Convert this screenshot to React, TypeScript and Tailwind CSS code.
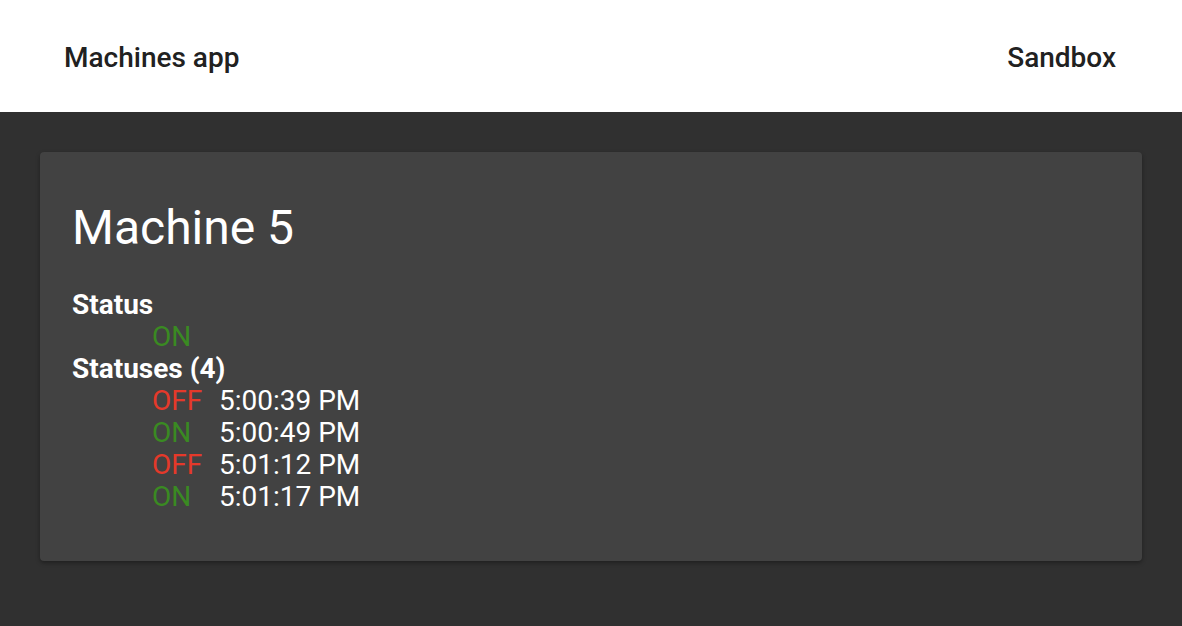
const statuses = [
  { on: false, time: "5:00:39 PM" },
  { on: true, time: "5:00:49 PM" },
  { on: false, time: "5:01:12 PM" },
  { on: true, time: "5:01:17 PM" },
]

function StatusLabel({ on }: { on: boolean }) {
  return (
    <span className={on ? "text-[#3a8a22]" : "text-[#e5392a]"}>{on ? "ON" : "OFF"}</span>
  )
}

export default function App() {
  return (
    <div className="min-h-[626px] bg-[#303030] font-['Roboto',sans-serif]">
      {/* Header */}
      <header className="h-[112px] bg-white flex items-center justify-between pl-16 pr-[66px] pt-1 text-[28px] font-medium text-[#212121]">
        <span>Machines app</span>
        <span>Sandbox</span>
      </header>

      <main className="px-10 pt-10">
        <div className="bg-[#424242] rounded shadow-[0_2px_4px_rgba(0,0,0,0.35)] px-8 pt-[44px] pb-[48px] text-white">
          <h1 className="text-[48px] leading-[64px] font-normal">Machine 5</h1>

          <div className="mt-[29px] text-[28px] leading-8">
            <div className="font-bold">Status</div>
            <div className="pl-20">
              <StatusLabel on={true} />
            </div>
            <div className="font-bold">Statuses ({statuses.length})</div>
            {statuses.map((s, i) => (
              <div key={i} className="pl-20 flex">
                <span className="w-[67px]">
                  <StatusLabel on={s.on} />
                </span>
                <span>{s.time}</span>
              </div>
            ))}
          </div>
        </div>
      </main>
    </div>
  )
}
